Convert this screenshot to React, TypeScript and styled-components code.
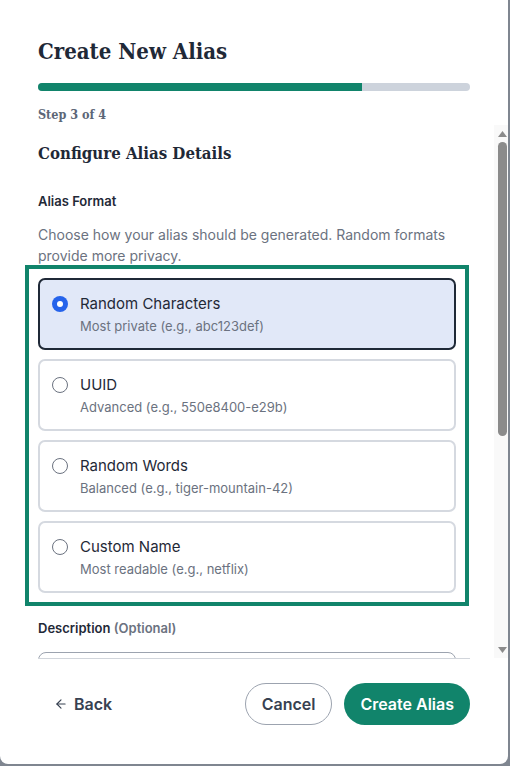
import React, { useState } from "react";
import styled, { createGlobalStyle } from "styled-components";
import { ArrowLeft } from "lucide-react";

const GlobalStyle = createGlobalStyle`
  html, body {
    margin: 0;
    padding: 0;
  }
  body {
    background: #7f8690;
    font-family: Inter, "Noto Sans", sans-serif;
    -webkit-font-smoothing: antialiased;
  }
  * {
    box-sizing: border-box;
  }
`;

const GREEN = "#11846b";
const BAR_GREY = "#8b8b8b";
const SERIF = `"DejaVu Serif", "Liberation Serif", serif`;

const Dialog = styled.div`
  width: 508px;
  height: 764px;
  background: #ffffff;
  border-radius: 0 0 8px 8px;
  display: flex;
  flex-direction: column;
  overflow: hidden;
`;

const Header = styled.header`
  padding: 35px 38px 0;
`;

const Title = styled.h1`
  margin: 0;
  font-family: ${SERIF};
  font-stretch: condensed;
  font-weight: 700;
  font-size: 22px;
  line-height: 32px;
  color: #1f2937;
`;

const Progress = styled.div`
  margin-top: 16px;
  height: 8px;
  border-radius: 4px;
  background: #cdd3dc;
  overflow: hidden;
`;

const ProgressFill = styled.div`
  height: 100%;
  background: ${GREEN};
`;

const StepLabel = styled.div`
  margin-top: 14px;
  font-family: ${SERIF};
  font-stretch: condensed;
  font-weight: 700;
  font-size: 12.5px;
  line-height: 20px;
  color: #5c6677;
`;

/* Body area: scrolling content beside a classic scroll rail */
const BodyRow = styled.div`
  flex: 1;
  min-height: 0;
  display: flex;
`;

const Body = styled.div`
  flex: 1;
  min-width: 0;
  overflow-y: auto;
  scrollbar-width: none;
  padding: 15px 38px 24px;
`;

const ScrollRail = styled.div`
  flex: none;
  width: 14px;
  background: #f9f9f9;
  display: flex;
  flex-direction: column;
  align-items: center;
`;

const RailButton = styled.div`
  flex: none;
  height: 17px;
  width: 100%;
  display: flex;
  align-items: center;
  justify-content: center;
  padding-left: 2px;
`;

const RailTrack = styled.div`
  flex: 1;
  width: 100%;
  padding: 0 1px 0 4px;
`;

const RailThumb = styled.div`
  width: 100%;
  border-radius: 5px;
  background: ${BAR_GREY};
`;

const SectionTitle = styled.h2`
  margin: 0;
  font-family: ${SERIF};
  font-stretch: condensed;
  font-weight: 700;
  font-size: 16.7px;
  line-height: 26px;
  color: #1f2937;
`;

const Field = styled.div<{ $gap?: number }>`
  margin-top: ${(p) => p.$gap ?? 25}px;
  display: flex;
  flex-direction: column;
`;

const FieldLabel = styled.label`
  font-size: 13px;
  font-weight: 600;
  line-height: 20px;
  color: #1f2937;
`;

const Optional = styled.span`
  color: #6b7280;
`;

const Hint = styled.p<{ $top?: number }>`
  margin: ${(p) => p.$top ?? 13}px 0 0;
  font-size: 14px;
  line-height: 21px;
  color: #6b7280;
`;

const RadioGroup = styled.div`
  margin-top: 12px;
  display: flex;
  flex-direction: column;
  gap: 9px;
  outline: 4px solid ${GREEN};
  outline-offset: 9px;
`;

const OptionCard = styled.label<{ $selected: boolean }>`
  display: flex;
  align-items: flex-start;
  gap: 12px;
  padding: 14px 16px 13px 12px;
  border: 2px solid ${(p) => (p.$selected ? "#1f2937" : "#d5d9e0")};
  border-radius: 7px;
  background: ${(p) => (p.$selected ? "#e1e8f8" : "#ffffff")};
  cursor: pointer;
`;

const Radio = styled.input.attrs({ type: "radio" })`
  appearance: none;
  margin: 2px 0 0;
  flex: none;
  width: 16px;
  height: 16px;
  border-radius: 50%;
  border: 1.5px solid #6b7280;
  background: #ffffff;
  display: grid;
  place-items: center;

  &:checked {
    border: none;
    background: #2563eb;
  }
  &:checked::after {
    content: "";
    width: 6px;
    height: 6px;
    border-radius: 50%;
    background: #ffffff;
  }
`;

const OptionText = styled.div`
  display: flex;
  flex-direction: column;
  gap: 3px;
`;

const OptionTitle = styled.span`
  font-size: 15px;
  line-height: 20px;
  color: #1f2937;
`;

const OptionSub = styled.span`
  font-size: 13px;
  line-height: 18px;
  color: #6b7280;
`;

const TextArea = styled.textarea`
  margin-top: 14px;
  height: 96px;
  resize: none;
  border: 1px solid #9ca3af;
  border-radius: 8px;
  padding: 10px 12px;
  font-family: inherit;
  font-size: 14px;
  color: #1f2937;
`;

const Counter = styled.span`
  margin-top: 6px;
  align-self: flex-end;
  font-size: 12px;
  line-height: 18px;
  color: #6b7280;
`;

const Select = styled.select`
  margin-top: 14px;
  height: 44px;
  border: 1px solid #9ca3af;
  border-radius: 8px;
  padding: 0 12px;
  font-family: inherit;
  font-size: 14px;
  color: #1f2937;
  background: #ffffff;
`;

const Footer = styled.footer`
  margin: 0 38px;
  border-top: 1px solid #d1d5db;
  padding: 24px 0 39px;
  display: flex;
  align-items: center;
  justify-content: space-between;
`;

const Actions = styled.div`
  display: flex;
  gap: 12px;
`;

const BaseButton = styled.button`
  height: 42px;
  padding: 0 16px;
  border-radius: 999px;
  font-family: Inter, "Noto Sans", sans-serif;
  font-size: 16px;
  font-weight: 600;
  display: inline-flex;
  align-items: center;
  gap: 6px;
  cursor: pointer;
`;

const BackButton = styled(BaseButton)`
  border: none;
  background: transparent;
  color: #374151;
  padding: 0 16px;
`;

const CancelButton = styled(BaseButton)`
  border: 1px solid #9ca3af;
  background: #ffffff;
  color: #374151;
`;

const PrimaryButton = styled(BaseButton)`
  border: none;
  background: ${GREEN};
  color: #ffffff;
`;

const Triangle = ({ up }: { up: boolean }) => (
  <svg width="9" height="6" viewBox="0 0 9 6" aria-hidden="true">
    <path d={up ? "M4.5 0 L9 6 L0 6 Z" : "M0 0 L9 0 L4.5 6 Z"} fill={BAR_GREY} />
  </svg>
);

const formats = [
  { id: "random", title: "Random Characters", sub: "Most private (e.g., abc123def)" },
  { id: "uuid", title: "UUID", sub: "Advanced (e.g., 550e8400-e29b)" },
  { id: "words", title: "Random Words", sub: "Balanced (e.g., tiger-mountain-42)" },
  { id: "custom", title: "Custom Name", sub: "Most readable (e.g., netflix)" },
];

export default function App() {
  const [format, setFormat] = useState("random");
  const step = 3;
  const total = 4;
  // share of the scrolling content that is in view
  const visibleShare = 0.59;

  return (
    <>
      <GlobalStyle />
      <Dialog role="dialog" aria-labelledby="alias-title">
        <Header>
          <Title id="alias-title">Create New Alias</Title>
          <Progress>
            <ProgressFill style={{ width: `${(step / total) * 100}%` }} />
          </Progress>
          <StepLabel>
            Step {step} of {total}
          </StepLabel>
        </Header>

        <BodyRow>
          <Body>
            <SectionTitle>Configure Alias Details</SectionTitle>

            <Field>
              <FieldLabel>Alias Format</FieldLabel>
            </Field>
            <Hint>
              Choose how your alias should be generated. Random formats provide more privacy.
            </Hint>
            <RadioGroup role="radiogroup">
              {formats.map((f) => (
                <OptionCard key={f.id} $selected={format === f.id}>
                  <Radio
                    name="format"
                    value={f.id}
                    checked={format === f.id}
                    onChange={() => setFormat(f.id)}
                  />
                  <OptionText>
                    <OptionTitle>{f.title}</OptionTitle>
                    <OptionSub>{f.sub}</OptionSub>
                  </OptionText>
                </OptionCard>
              ))}
            </RadioGroup>

            <Field>
              <FieldLabel>
                Description <Optional>(Optional)</Optional>
              </FieldLabel>
              <TextArea placeholder="What is this alias for?" />
              <Counter>0 / 100</Counter>
            </Field>

            <Field>
              <FieldLabel>Forward To</FieldLabel>
              <Select defaultValue="primary">
                <option value="primary">alex@example.com</option>
              </Select>
              <Hint $top={8}>Emails sent to this alias will be delivered here.</Hint>
            </Field>

            <Field>
              <FieldLabel>Expiration</FieldLabel>
              <Select defaultValue="never">
                <option value="never">Never</option>
              </Select>
            </Field>
          </Body>

          <ScrollRail aria-hidden="true">
            <RailButton>
              <Triangle up />
            </RailButton>
            <RailTrack>
              <RailThumb style={{ height: `${visibleShare * 100}%` }} />
            </RailTrack>
            <RailButton>
              <Triangle up={false} />
            </RailButton>
          </ScrollRail>
        </BodyRow>

        <Footer>
          <BackButton>
            <ArrowLeft size={14} strokeWidth={2} />
            Back
          </BackButton>
          <Actions>
            <CancelButton>Cancel</CancelButton>
            <PrimaryButton>Create Alias</PrimaryButton>
          </Actions>
        </Footer>
      </Dialog>
    </>
  );
}
